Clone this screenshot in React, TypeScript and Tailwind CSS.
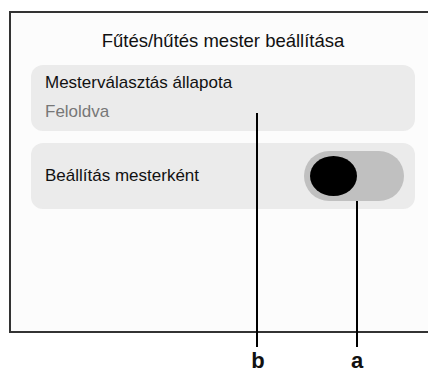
export default function App() {
  return (
    <div className="relative w-[428px] h-[374px] overflow-hidden bg-white font-['Liberation_Sans',Arial,sans-serif] text-[#111]">
      <div className="ml-[9px] mt-[11px] w-[440px] h-[322px] border-2 border-[#333] bg-[#fcfcfc] pt-[16px]">
        <div className="ml-[20px] w-[384px] flex flex-col">
          <h1 className="text-center text-[18.5px] leading-6 mb-[12px]">Fűtés/hűtés mester beállítása</h1>
          <div className="rounded-xl bg-[#ebebeb] h-[66px] pt-2 pl-[14px] text-[17px] leading-5">
            <p>Mesterválasztás állapota</p>
            <p className="mt-[9px] text-[#777]">Feloldva</p>
          </div>
          <div className="mt-3 rounded-xl bg-[#ebebeb] h-[66px] pl-[14px] pr-[11px] flex items-center justify-between text-[17px] leading-5">
            <span>Beállítás mesterként</span>
            <div className="w-[100px] h-[50px] rounded-full bg-[#c0c0c0] flex items-center pl-[6px]">
              <div className="w-[47px] h-[40px] rounded-[50%] bg-black" />
            </div>
          </div>
        </div>
      </div>

      {/* callout lines */}
      <div className="absolute left-[256px] top-[113px] w-[2px] h-[234px] bg-black" />
      <div className="absolute left-[356px] top-[201px] w-[2px] h-[146px] bg-black" />
      <span className="absolute left-[246px] top-[349px] w-[24px] text-center text-[22px] leading-6 font-bold">b</span>
      <span className="absolute left-[345px] top-[349px] w-[24px] text-center text-[22px] leading-6 font-bold">a</span>
    </div>
  );
}
